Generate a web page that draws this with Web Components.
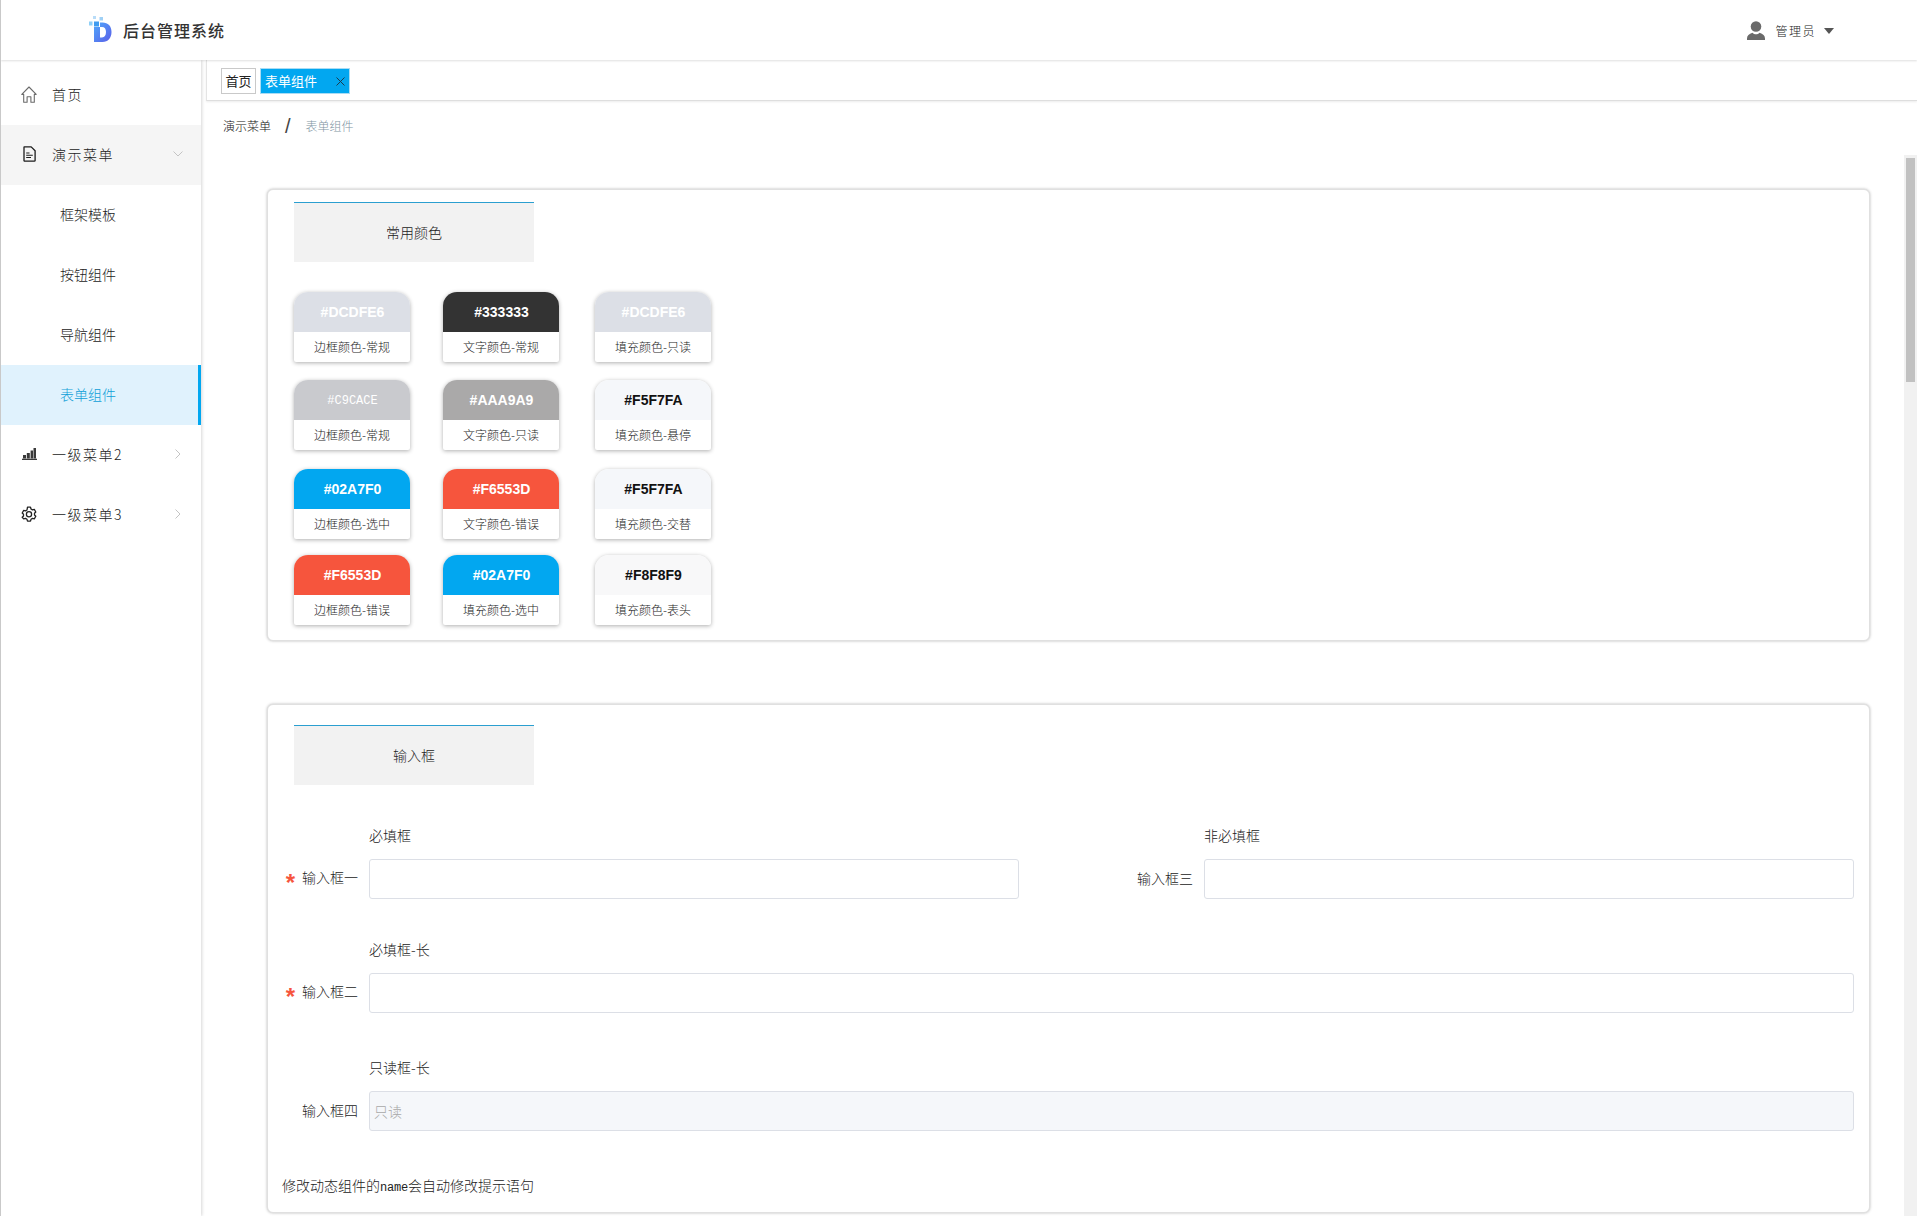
<!DOCTYPE html>
<html lang="zh-CN">
<head>
<meta charset="utf-8">
<title>后台管理系统</title>
<style>
html,body{margin:0;height:100%;overflow:hidden;background:#fff}
body{font-family:"Noto Sans CJK SC","Liberation Sans",sans-serif;color:#222;font-weight:300}
</style>
</head>
<body>
<admin-app>
  <app-header slot="header" title-text="后台管理系统" user="管理员"></app-header>
  <side-menu slot="side">
    <menu-item icon="home">首页</menu-item>
    <menu-item icon="file" group chevron="down">演示菜单</menu-item>
    <menu-item sub>框架模板</menu-item>
    <menu-item sub>按钮组件</menu-item>
    <menu-item sub>导航组件</menu-item>
    <menu-item sub active>表单组件</menu-item>
    <menu-item icon="bars" chevron="right">一级菜单2</menu-item>
    <menu-item icon="gear" chevron="right">一级菜单3</menu-item>
  </side-menu>
  <tab-bar slot="tabs">
    <tab-chip>首页</tab-chip>
    <tab-chip active>表单组件</tab-chip>
  </tab-bar>
  <bread-crumb slot="crumb" first="演示菜单" last="表单组件"></bread-crumb>
  <section-card title-text="常用颜色" style="--head-top:13px;--card-h:452px">
    <color-grid>
      <color-chip hex="#DCDFE6" bg="#DCDFE6" fg="#fff" edge>边框颜色-常规</color-chip>
      <color-chip hex="#333333" bg="#333333" fg="#fff">文字颜色-常规</color-chip>
      <color-chip hex="#DCDFE6" bg="#DCDFE6" fg="#fff" edge>填充颜色-只读</color-chip>
      <color-chip hex="#C9CACE" bg="#C9CACE" fg="#fff" thin>边框颜色-常规</color-chip>
      <color-chip hex="#AAA9A9" bg="#AAA9A9" fg="#fff">文字颜色-只读</color-chip>
      <color-chip hex="#F5F7FA" bg="#F5F7FA" fg="#111" edge>填充颜色-悬停</color-chip>
      <color-chip hex="#02A7F0" bg="#02A7F0" fg="#fff">边框颜色-选中</color-chip>
      <color-chip hex="#F6553D" bg="#F6553D" fg="#fff">文字颜色-错误</color-chip>
      <color-chip hex="#F5F7FA" bg="#F5F7FA" fg="#111" edge>填充颜色-交替</color-chip>
      <color-chip hex="#F6553D" bg="#F6553D" fg="#fff">边框颜色-错误</color-chip>
      <color-chip hex="#02A7F0" bg="#02A7F0" fg="#fff">填充颜色-选中</color-chip>
      <color-chip hex="#F8F8F9" bg="#F8F8F9" fg="#111" edge>填充颜色-表头</color-chip>
    </color-grid>
  </section-card>
  <section-card title-text="输入框" style="--head-top:21px;--card-h:509px;margin-top:63px">
    <form-layout>
      <form-field hint="必填框" label="输入框一" required></form-field>
      <form-field hint="非必填框" label="输入框三"></form-field>
      <form-field hint="必填框-长" label="输入框二" required style="grid-column:1/3;margin-top:40px"></form-field>
      <form-field hint="只读框-长" label="输入框四" value="只读" readonly style="grid-column:1/3;margin-top:44px"></form-field>
      <note-line style="grid-column:1/3;margin-top:44px">修改动态组件的<code>name</code>会自动修改提示语句</note-line>
    </form-layout>
  </section-card>
</admin-app>

<script>
const CJK = '"Noto Sans CJK SC","Liberation Sans",sans-serif';
const ICONS = {
  home:'<svg width="16" height="17" viewBox="0 0 16 17" fill="none" stroke="#6b6b6b" stroke-width="1.1" stroke-linejoin="round"><path d="M.8 8.4 8 1l7.2 7.4h-1.900v7.800H9.900v-5.400H6.100v5.400H2.700V8.400z"/></svg>',
  file:'<svg width="13" height="16" viewBox="0 0 13 16" fill="none" stroke="#1c1c1c" stroke-width="1.3" stroke-linejoin="round"><path d="M1 1.200c0-.2.1-.3.3-.3h6.900l3.900 3.900v9.600c0 .5-.3.8-.8.800H1.800c-.5 0-.8-.3-.8-.8z"/><path d="M3.200 7h3.300M3.200 9.200h6.600M3.200 11.500h4.800" stroke-width="1.100"/></svg>',
  bars:'<svg width="15" height="12" viewBox="0 0 15 12" fill="#3a3a3a"><rect x="1" y="7" width="3" height="3.500"/><rect x="4.800" y="5" width="3" height="5.500"/><rect x="8.600" y="2.500" width="2.400" height="8"/><rect x="11.500" y="0" width="2.500" height="10.500"/><rect x="0" y="10.700" width="15" height="1.300"/></svg>',
  gear:'<svg width="16" height="16" viewBox="0 0 16 16" fill="none" stroke="#222" stroke-width="1.300" stroke-linejoin="round"><path d="M6.500 1.200h3l.5 1.800 1.500.9 1.800-.5 1.500 2.600-1.300 1.300v1.700l1.300 1.300-1.500 2.600-1.800-.5-1.500.9-.5 1.800h-3l-.5-1.800-1.500-.9-1.800.5L1.200 11.300l1.300-1.300V8.300L1.200 7l1.500-2.600 1.800.5 1.500-.9z"/><circle cx="8" cy="8.200" r="2.600"/></svg>'
};
function def(name, css, render){
  customElements.define(name, class extends HTMLElement{
    connectedCallback(){
      if(this.shadowRoot) return;
      this.attachShadow({mode:'open'}).innerHTML = '<style>'+css+'</style>'+render(this);
    }
  });
}

def('admin-app', `
  :host{display:flex;flex-direction:column;height:1216px;box-sizing:border-box;border-left:1px solid #c9c9c9;background:#fff;overflow:hidden}
  .body{flex:1;display:flex;min-height:0}
  .main{flex:1;display:flex;flex-direction:column;min-width:0;margin-left:5px}
  .scrollwrap{flex:1;display:flex;min-height:0}
  .scroller{flex:1;min-width:0;box-sizing:border-box;padding:34px 34px 0 61px}
  .rail{width:13px;background:#f1f1f1;box-sizing:border-box;padding:3px 2px 0}
  .thumb{height:224px;background:#c1c1c1}
`, () => `
  <slot name="header"></slot>
  <div class="body">
    <slot name="side"></slot>
    <div class="main">
      <slot name="tabs"></slot>
      <slot name="crumb"></slot>
      <div class="scrollwrap">
        <div class="scroller"><slot></slot></div>
        <div class="rail"><div class="thumb"></div></div>
      </div>
    </div>
  </div>`);

def('app-header', `
  :host{display:flex;align-items:center;height:60px;flex:none;position:relative;z-index:3;background:#fff;box-shadow:0 1px 2px rgba(0,0,0,.13);padding:0 83px 0 85px;font-family:${CJK}}
  .logo{display:block;width:26px;height:27px;margin-top:-1px}
  h1{margin:-1px 0 0 11px;font-size:16px;font-weight:500;letter-spacing:1px;line-height:20px;color:#333}
  .sp{flex:1}
  .user{display:block;margin-right:10px}
  .name{font-size:12px;letter-spacing:1.500px;line-height:20px;color:#222;margin-top:2px}
  .caret{width:0;height:0;border:5px solid transparent;border-top:6px solid #555;border-bottom:0;margin-left:8px;margin-top:1px}
`, el => `
  <svg class="logo" viewBox="0 0 26 27">
    <defs><linearGradient id="g" x1="0" y1="0" x2="1" y2="1"><stop offset="0" stop-color="#4fa8fb"/><stop offset="1" stop-color="#5b5ee8"/></linearGradient></defs>
    <rect x="3" y="5.500" width="3.500" height="4" fill="#8fd0f7"/>
    <rect x="8" y="5.500" width="5" height="5" fill="#3f9cf0"/>
    <rect x="7" y="0" width="3" height="3" fill="#b8dcf8"/>
    <rect x="13.500" y="1" width="3.500" height="3.500" fill="#9fd0f5"/>
    <path fill="url(#g)" fill-rule="evenodd" d="M14 6.500h2.500c5.500 0 9 3.500 9 9.500s-3.500 10-9 10H8V11h6zM14 11v10.500h2c2.600 0 4-2 4-5.400 0-3.200-1.400-5.100-4-5.100z"/>
  </svg>
  <h1>${el.getAttribute('title-text')}</h1>
  <div class="sp"></div>
  <svg class="user" width="18" height="19" viewBox="0 0 18 19" fill="#6a6a6a"><circle cx="9" cy="5.500" r="5.300"/><path d="M0 19v-1.500c0-3 2-4.800 5.500-5.800 1 1 2.200 1.500 3.500 1.500s2.500-.5 3.500-1.500c3.500 1 5.500 2.800 5.500 5.800V19z"/></svg>
  <span class="name">${el.getAttribute('user')}</span>
  <span class="caret"></span>`);

def('side-menu', `
  :host{display:block;width:200px;flex:none;padding-top:5px;box-sizing:border-box;background:#fff;box-shadow:1px 0 3px rgba(0,0,0,.16);position:relative;z-index:2}
`, () => '<slot></slot>');

def('menu-item', `
  :host{display:flex;align-items:center;height:60px;box-sizing:border-box;padding:0 0 2px 20px;font-size:14px;color:#222;font-family:${CJK};line-height:20px}
  :host([group]){background:#f5f5f5}
  :host([sub]){padding-left:59px}
  :host([active]){background:#e0f2fd;color:#0f9fd8;border-right:3px solid #02a7f0}
  .ic{width:16px;display:flex;justify-content:center;margin-right:15px}
  .t{letter-spacing:1.500px;flex:1}
  :host([sub]) .t{letter-spacing:0}
  .ch{display:block;margin-right:18px}
`, el => {
  const i = el.getAttribute('icon'), c = el.getAttribute('chevron');
  const chev = c === 'down'
    ? '<svg class="ch" width="10" height="6" viewBox="0 0 10 6" fill="none" stroke="#c4c4c4"><path d="M.5.5 5 5 9.500.5"/></svg>'
    : c === 'right'
    ? '<svg class="ch" style="margin-right:20px" width="6" height="10" viewBox="0 0 6 10" fill="none" stroke="#c4c4c4"><path d="M.5.500 5 5 .5 9.500"/></svg>' : '';
  return (i ? `<span class="ic">${ICONS[i]}</span>` : '') + '<span class="t"><slot></slot></span>' + chev;
});

def('tab-bar', `
  :host{display:flex;align-items:flex-start;gap:4px;height:41px;flex:none;box-sizing:border-box;padding:8px 0 0 14px;background:#fff;border-left:1px solid #e4e4e4;border-bottom:1px solid #dedede;box-shadow:0 1px 2px rgba(0,0,0,.08)}
`, () => '<slot></slot>');

def('tab-chip', `
  :host{display:flex;align-items:center;width:35px;height:26px;box-sizing:border-box;justify-content:center;border:1px solid #c9c9c9;font-size:13px;font-weight:400;line-height:20px;font-family:${CJK};color:#222;background:#fff}
  :host([active]){width:90px;background:#02a7f0;border-color:#a9dcf4;color:#fff;padding:0 4px;justify-content:space-between}
  svg{display:block}
`, el => '<slot></slot>' + (el.hasAttribute('active') ? '<svg width="9" height="9" viewBox="0 0 9 9" stroke="#1b3c50" fill="none"><path d="M.5.500l8 8M8.500.500l-8 8"/></svg>' : ''));

def('bread-crumb', `
  :host{display:flex;align-items:center;height:54px;flex:none;box-sizing:border-box;padding:0 0 5px 17px;font-size:12px;line-height:20px;font-family:${CJK};color:#111}
  .s{font-size:20px;margin:0 15px 0 14px;color:#444;font-family:"Liberation Sans",sans-serif;font-weight:400}
  .l{color:#7f95a3}
`, el => `<span>${el.getAttribute('first')}</span><span class="s">/</span><span class="l">${el.getAttribute('last')}</span>`);

def('section-card', `
  :host{display:block;height:var(--card-h);box-sizing:border-box;background:#fff;border:1px solid #e0e0e0;border-radius:6px;box-shadow:0 0 3px rgba(0,0,0,.28);padding-top:calc(var(--head-top) - 1px)}
  .head{width:240px;height:60px;box-sizing:border-box;margin-left:26px;padding-bottom:2px;background:#f2f2f2;border-top:1px solid #2b9fd0;display:flex;align-items:center;justify-content:center;font-size:14px;line-height:20px;font-family:${CJK};color:#222}
`, el => `<div class="head">${el.getAttribute('title-text')}</div><slot></slot>`);

def('color-grid', `
  :host{display:grid;grid-template-columns:149px 152px 116px;grid-template-rows:88px 89px 86px 70px;margin:30px 0 0 26px}
`, () => '<slot></slot>');

def('color-chip', `
  :host{display:block;width:116px;height:70px;background:#fff;border-radius:14px 14px 2px 2px;box-shadow:0 1px 4px rgba(0,0,0,.32);overflow:hidden}
  .top{height:40px;display:flex;align-items:center;justify-content:center;font:bold 14px/20px "Liberation Sans",sans-serif;padding-left:1px;box-sizing:border-box}
  :host([thin]) .top{font:normal 12px/20px "Liberation Mono",monospace;padding-top:2px}
  .bot{height:30px;display:flex;align-items:center;justify-content:center;font-size:12px;line-height:20px;font-family:${CJK};color:#1c1c1c}
`, el => `<div class="top" style="background:${el.getAttribute('bg')};color:${el.getAttribute('fg')}">${el.getAttribute('hex')}</div><div class="bot"><slot></slot></div>`);

def('form-layout', `
  :host{display:grid;grid-template-columns:751px 751px;column-gap:84px;margin-top:40px}
`, () => '<slot></slot>');

def('form-field', `
  :host{display:block;font-family:${CJK};font-size:14px;line-height:20px;color:#222}
  .hint{padding-left:101px;height:20px;margin-bottom:14px}
  .row{display:flex;align-items:center}
  label{width:91px;flex:none;box-sizing:border-box;text-align:right;margin:-2px 10px 0 0;white-space:nowrap;padding-right:1px}
  .req{color:#f6553d;font:bold 24px/14px "Liberation Sans",sans-serif;margin-right:7px;display:inline-block;vertical-align:-8px}
  input{flex:1;min-width:0;height:40px;box-sizing:border-box;border:1px solid #dcdfe6;border-radius:3px;outline:0;padding:0 4px;font:inherit;font-weight:300;color:#a8a8a8;background:#fff}
  input[readonly]{background:#f5f7fa}
`, el => `
  <div class="hint">${el.getAttribute('hint')}</div>
  <div class="row">
    <label>${el.hasAttribute('required') ? '<span class="req">*</span>' : ''}${el.getAttribute('label')}</label>
    <input ${el.hasAttribute('readonly') ? 'readonly' : ''} value="${el.getAttribute('value') || ''}">
  </div>`);

def('note-line', `
  :host{display:block;padding-left:14px;font-size:14px;line-height:20px;font-family:${CJK};color:#222}
  ::slotted(code){font:12px "Liberation Mono",monospace;letter-spacing:-.2px}
`, () => '<slot></slot>');
</script>
</body>
</html>
